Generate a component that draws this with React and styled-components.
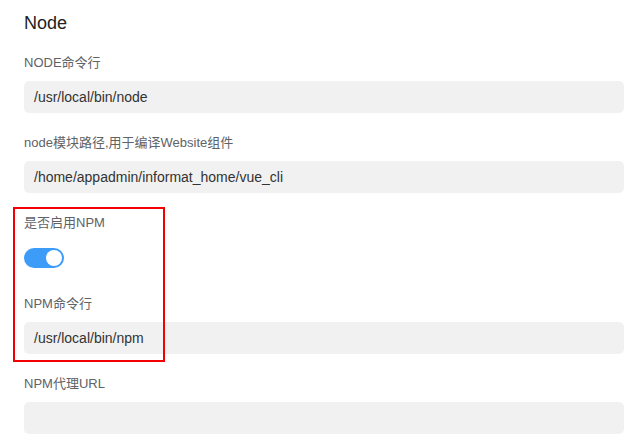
import styled, { createGlobalStyle } from "styled-components";

const GlobalStyle = createGlobalStyle`
  html, body {
    margin: 0;
    padding: 0;
    background: #ffffff;
  }
  body {
    font-family: "Liberation Sans", "Noto Sans CJK SC", sans-serif;
  }
`;

const Page = styled.div`
  position: relative;
  width: 636px;
  height: 448px;
  overflow: hidden;
  padding: 0 12px 0 24px;
  box-sizing: border-box;
`;

const Title = styled.h3`
  margin: 0;
  padding-top: 12px;
  height: 52px;
  box-sizing: border-box;
  font-size: 18px;
  font-weight: 400;
  line-height: 22px;
  color: #222;
`;

const Form = styled.div`
  display: flex;
  flex-direction: column;
  gap: 19px;
`;

const Item = styled.div`
  display: flex;
  flex-direction: column;
  gap: 9px;
`;

const Label = styled.label`
  height: 20px;
  line-height: 21px;
  font-size: 13px;
  color: #606266;
`;

const Input = styled.div`
  height: 32px;
  line-height: 32px;
  border-radius: 5px;
  background: #f1f1f1;
  padding: 0 10px;
  font-size: 14px;
  color: #333;
  box-sizing: border-box;
`;

const SwitchRow = styled.div`
  height: 33px;
  display: flex;
  align-items: center;
`;

const Switch = styled.span`
  position: relative;
  display: inline-block;
  width: 40px;
  height: 20px;
  border-radius: 10px;
  background: ${(p) => (p.$on ? "#3e9cf9" : "#dcdfe6")};

  &::after {
    content: "";
    position: absolute;
    top: 2px;
    left: ${(p) => (p.$on ? "22px" : "2px")};
    width: 16px;
    height: 16px;
    border-radius: 50%;
    background: #fff;
  }
`;

const Highlight = styled.div`
  position: absolute;
  left: 13px;
  top: 207px;
  width: 152px;
  height: 155px;
  border: 2px solid #f40000;
  box-sizing: border-box;
  pointer-events: none;
`;

function App() {
  return (
    <Page>
      <GlobalStyle />
      <Title>Node</Title>
      <Form>
        <Item>
          <Label>NODE命令行</Label>
          <Input>/usr/local/bin/node</Input>
        </Item>
        <Item>
          <Label>node模块路径,用于编译Website组件</Label>
          <Input>/home/appadmin/informat_home/vue_cli</Input>
        </Item>
        <Item>
          <Label>是否启用NPM</Label>
          <SwitchRow>
            <Switch $on />
          </SwitchRow>
        </Item>
        <Item>
          <Label>NPM命令行</Label>
          <Input>/usr/local/bin/npm</Input>
        </Item>
        <Item>
          <Label>NPM代理URL</Label>
          <Input />
        </Item>
      </Form>
      <Highlight />
    </Page>
  );
}

export default App;
